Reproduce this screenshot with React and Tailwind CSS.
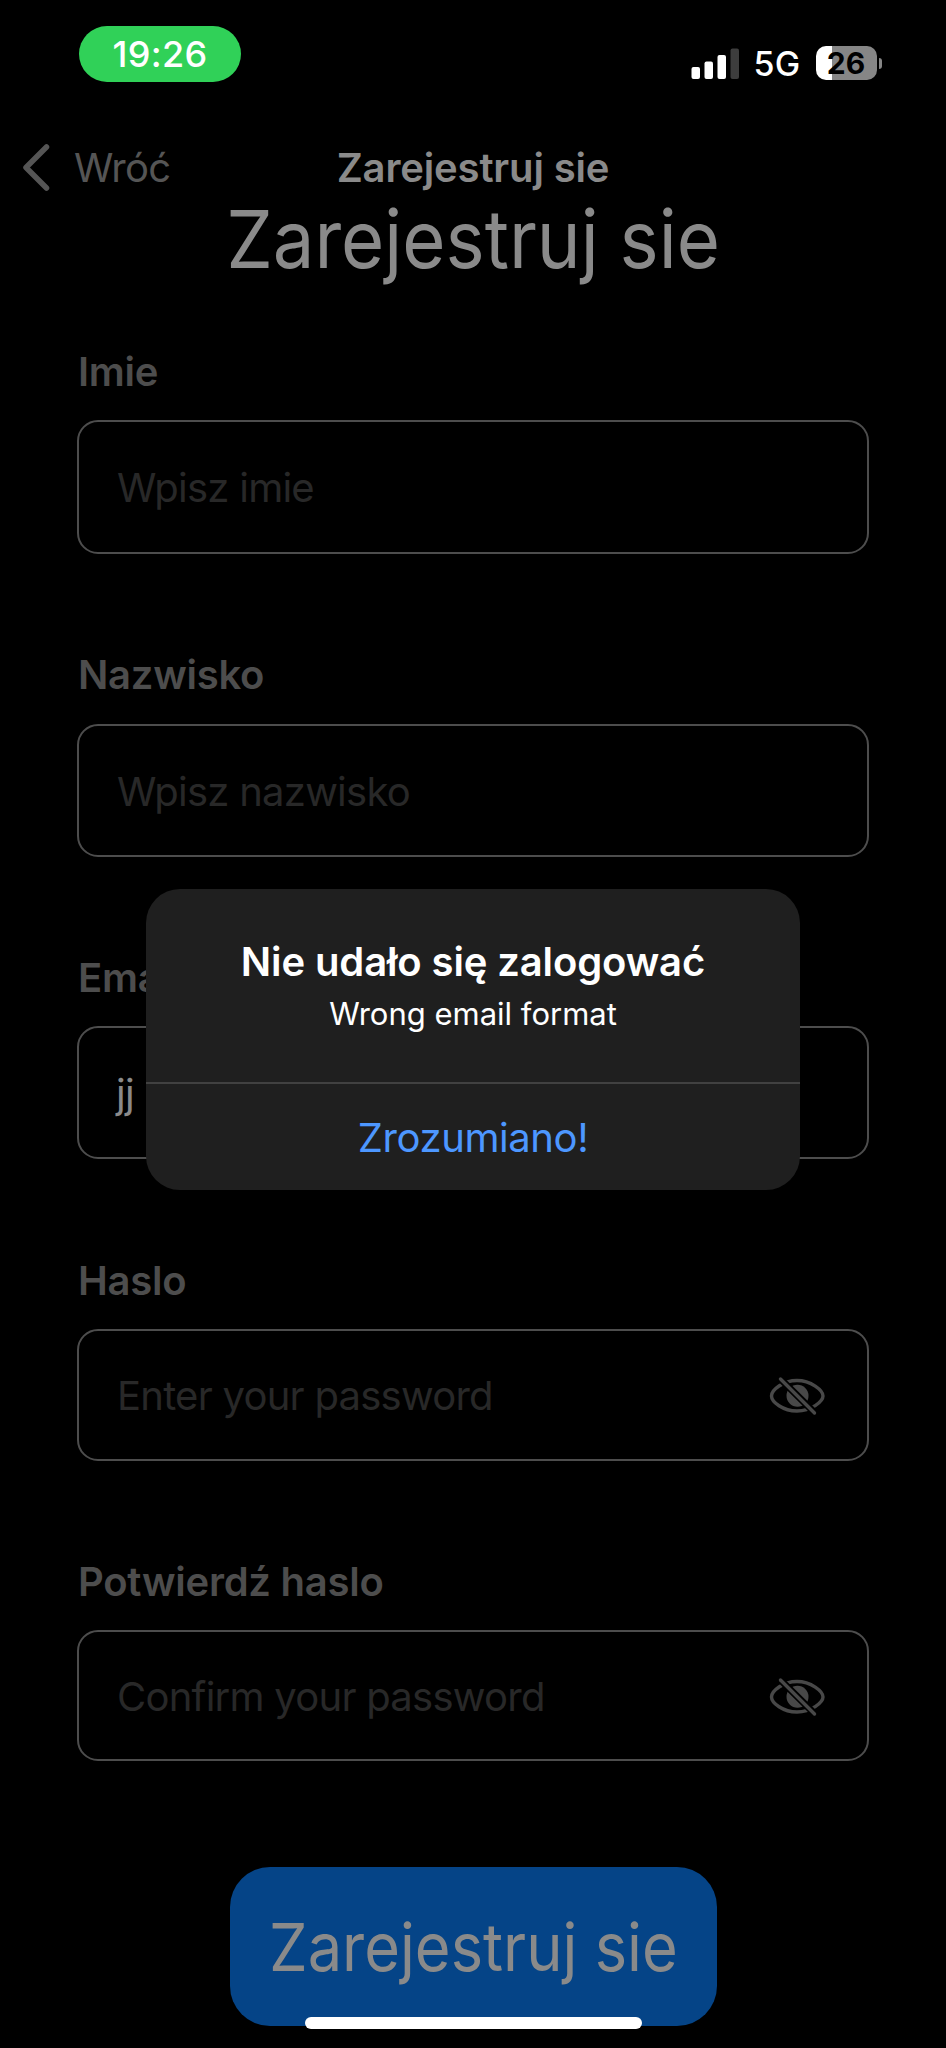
function StatusBar() {
  return (
    <header className="flex h-[118px] items-start pl-[79px] pr-16">
      <div className="mt-[26px] flex h-14 w-[162px] items-center justify-center rounded-full bg-[#30d158] text-4xl font-medium leading-[56px] tracking-[0.3px] text-white">
        19:26
      </div>
      <div className="ml-auto mt-[46px] flex h-[34px] items-center">
        <svg className="mr-[15px]" width="48" height="32" viewBox="0 0 48 32">
          <rect x="0.5" y="20" width="8.5" height="12" rx="2" fill="#fff" />
          <rect x="13.5" y="14.5" width="8.5" height="17.5" rx="2" fill="#fff" />
          <rect x="26.5" y="8" width="8.5" height="24" rx="2" fill="#fff" />
          <rect x="39.5" y="1.5" width="8.5" height="30.5" rx="2" fill="#3d3d3d" />
        </svg>
        <span className="w-[62px] pt-px text-[34px] font-medium leading-[36px] tracking-[0.3px] text-white">5G</span>
        <div className="flex h-[34px] w-[61px] items-center justify-center rounded-[10px] bg-linear-to-r from-white from-[27%] to-[#868686] to-[27%] text-[30px] font-bold leading-[34px] text-black">
          26
        </div>
        <div className="ml-[2px] h-[11px] w-[3.5px] rounded-r-full bg-[#868686]" />
      </div>
    </header>
  );
}

function NavBar() {
  return (
    <nav className="grid h-[100px] grid-cols-3 items-center text-[40px] leading-[50px]">
      <div className="flex items-center text-[#555555]">
        <svg className="ml-[21px] mr-[21px]" width="32" height="50" viewBox="0 0 32 50" fill="none" stroke="currentColor" strokeWidth="5.5" strokeLinecap="round" strokeLinejoin="round">
          <path d="M25.5 4 L5 24.5 L25.5 45" />
        </svg>
        <span className="tracking-[-0.7px]">Wróć</span>
      </div>
      <h1 className="text-center font-semibold tracking-[-0.15px] whitespace-nowrap text-[#8a8a8a]">Zarejestruj sie</h1>
    </nav>
  );
}

function EyeOff() {
  return (
    <svg width="56" height="40" viewBox="0 0 56 40" fill="none" strokeLinecap="round">
      <path d="M2.500 20 C2.500 14 14 4.500 28 4.500 C42 4.500 54 14.500 54 20 C54 25.500 42 35 28 35 C14 35 2.500 26 2.500 20 Z" stroke="#484848" strokeWidth="3.4" />
      <circle cx="28.500" cy="19.800" r="11" fill="#484848" />
      <path d="M9 0.500 L47.500 38.500" stroke="#000" strokeWidth="7" />
      <path d="M11.500 3 L45.500 37" stroke="#484848" strokeWidth="3.4" />
    </svg>
  );
}

function Field({ label, placeholder, value, secure, outer, box }) {
  return (
    <div className={outer}>
      <label className="block h-12 pl-px text-[40px] leading-[48px] font-semibold tracking-[-0.25px] text-[#4d4d4d]">{label}</label>
      <div className={`flex items-center rounded-[21px] border-2 border-[#4d4d4d] pr-[42px] pl-[38px] text-[40px] ${box}`}>
        {value ? (
          <span className="-ml-px pt-0.5 tracking-[-0.7px] text-[#8a8a8a]">{value}</span>
        ) : (
          <span className="pt-0.5 tracking-[-0.75px] text-[#282828]">{placeholder}</span>
        )}
        {secure && (
          <span className="ml-auto pt-0.5">
            <EyeOff />
          </span>
        )}
      </div>
    </div>
  );
}

function Alert() {
  return (
    <div role="alertdialog" className="absolute top-[889px] left-[146px] flex h-[301px] w-[654px] flex-col rounded-[34px] bg-[#1f1f1f] text-center">
      <div className="flex h-[193px] flex-col items-center pt-[48px]">
        <h2 className="text-[40px] leading-[50px] font-semibold tracking-[-0.12px] text-white">Nie udało się zalogować</h2>
        <p className="mt-[6px] text-[31px] leading-[42px] text-white">Wrong email format</p>
      </div>
      <button className="h-[108px] border-t-2 border-[#414141] text-[40px] leading-[108px] tracking-[-0.4px] text-[#4d97ff]">
        Zrozumiano!
      </button>
    </div>
  );
}

export default function App() {
  return (
    <div className="relative h-[2048px] w-[946px] overflow-hidden bg-black font-['Inter',sans-serif]">
      <StatusBar />
      <NavBar />
      <h2 className="h-[42px] scale-x-[0.927] text-center text-[80px] leading-[42px] text-[#8a8a8a]">Zarejestruj sie</h2>
      <main className="flex flex-col px-[77px] pt-[88px]">
        <Field label="Imie" placeholder="Wpisz imie" outer="h-[303px]" box="mt-6 h-[134px]" />
        <Field label="Nazwisko" placeholder="Wpisz nazwisko" outer="h-[303px]" box="mt-[25px] h-[133px]" />
        <Field label="Email" value="jj" outer="h-[303px]" box="mt-6 h-[133px]" />
        <Field label="Haslo" placeholder="Enter your password" secure outer="h-[301px]" box="mt-6 h-[132px]" />
        <Field label="Potwierdź haslo" placeholder="Confirm your password" secure outer="h-[203px]" box="mt-6 h-[131px]" />
        <button className="mt-[106px] h-[159px] w-[487px] self-center rounded-[40px] bg-[#054487] text-[66.5px] leading-[160px] whitespace-nowrap text-[#8a8a8a]">
          <span className="inline-block scale-x-[0.923]">Zarejestruj sie</span>
        </button>
      </main>
      <Alert />
      <div className="absolute top-[2017px] left-[305px] h-[12px] w-[337px] rounded-full bg-white" />
    </div>
  );
}
